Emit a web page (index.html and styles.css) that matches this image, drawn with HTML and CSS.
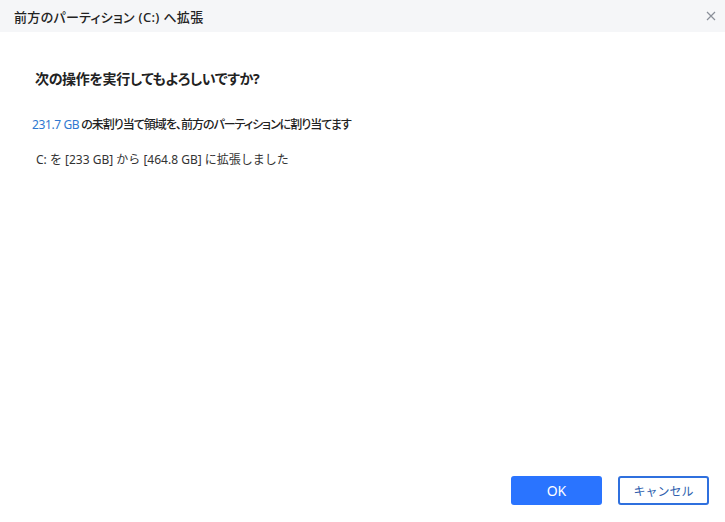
FILE: index.html
```html
<!DOCTYPE html>
<html lang="ja">
<head>
    <meta charset="UTF-8">
    <meta name="viewport" content="width=device-width, initial-scale=1.0">
    <title>前方のパーティション (C:) へ拡張</title>
    <link rel="stylesheet" href="styles.css">
</head>
<body>
    <div class="dialog">
        <div class="dialog-header">
            <span class="dialog-title">前方のパーティション (C:) へ拡張</span>
            <button class="close-button" aria-label="閉じる">
                <svg width="10" height="10" viewBox="0 0 10 10">
                    <path d="M1 1 L9 9 M9 1 L1 9" stroke="#8a8f99" stroke-width="1.2" fill="none"/>
                </svg>
            </button>
        </div>

        <div class="dialog-body">
            <h2 class="question">次の操作を実行してもよろしいですか?</h2>
            <p class="detail-line"><span class="size-link">231.7 GB</span> の未割り当て領域を、前方のパーティションに割り当てます</p>
            <p class="result-line">C: を [233 GB] から [464.8 GB] に拡張しました</p>
        </div>

        <div class="dialog-footer">
            <button class="ok-button">OK</button>
            <button class="cancel-button">キャンセル</button>
        </div>
    </div>
</body>
</html>
```

FILE: styles.css
```css
* {
    margin: 0;
    padding: 0;
    box-sizing: border-box;
    font-family: 'Noto Sans', 'Noto Sans CJK JP', sans-serif;
}

html, body {
    width: 100%;
    height: 100%;
    background: #ffffff;
}

.dialog {
    display: flex;
    flex-direction: column;
    height: 100vh;
}

.dialog-header {
    height: 32px;
    background-color: #f5f6f8;
    display: flex;
    align-items: center;
    justify-content: space-between;
    padding: 0 6px 0 14px;
}

.dialog-title {
    font-size: 13px;
    font-weight: 500;
    color: #222;
    font-feature-settings: "palt";
    letter-spacing: 0.3px;
}

.close-button {
    width: 16px;
    height: 16px;
    border: none;
    background: none;
    display: flex;
    align-items: center;
    justify-content: center;
    cursor: pointer;
}

.dialog-body {
    flex: 1;
    padding: 37px 0 0 32px;
}

.question {
    font-size: 14px;
    font-weight: 700;
    color: #222;
    margin-left: 3px;
    line-height: 20px;
    font-feature-settings: "palt";
    letter-spacing: -0.35px;
}

.detail-line {
    margin-top: 27px;
    font-size: 12px;
    line-height: 18px;
    color: #222;
    font-weight: 500;
    font-feature-settings: "palt";
    letter-spacing: -1px;
}

.size-link {
    color: #2e77d0;
    font-weight: 400;
    letter-spacing: -0.4px;
}

.result-line {
    margin-top: 17px;
    margin-left: 4px;
    font-size: 12px;
    line-height: 18px;
    color: #333;
}

.dialog-footer {
    display: flex;
    justify-content: flex-end;
    gap: 16px;
    padding: 0 16px 17px 0;
}

.ok-button,
.cancel-button {
    width: 91px;
    height: 29px;
    border-radius: 3px;
    cursor: pointer;
}

.ok-button {
    background-color: #2a74ff;
    border: none;
    color: #fff;
    font-size: 14px;
}

.cancel-button {
    background-color: #fff;
    border: 2px solid #2f70de;
    color: #2f5fae;
    font-size: 12px;
}
```
